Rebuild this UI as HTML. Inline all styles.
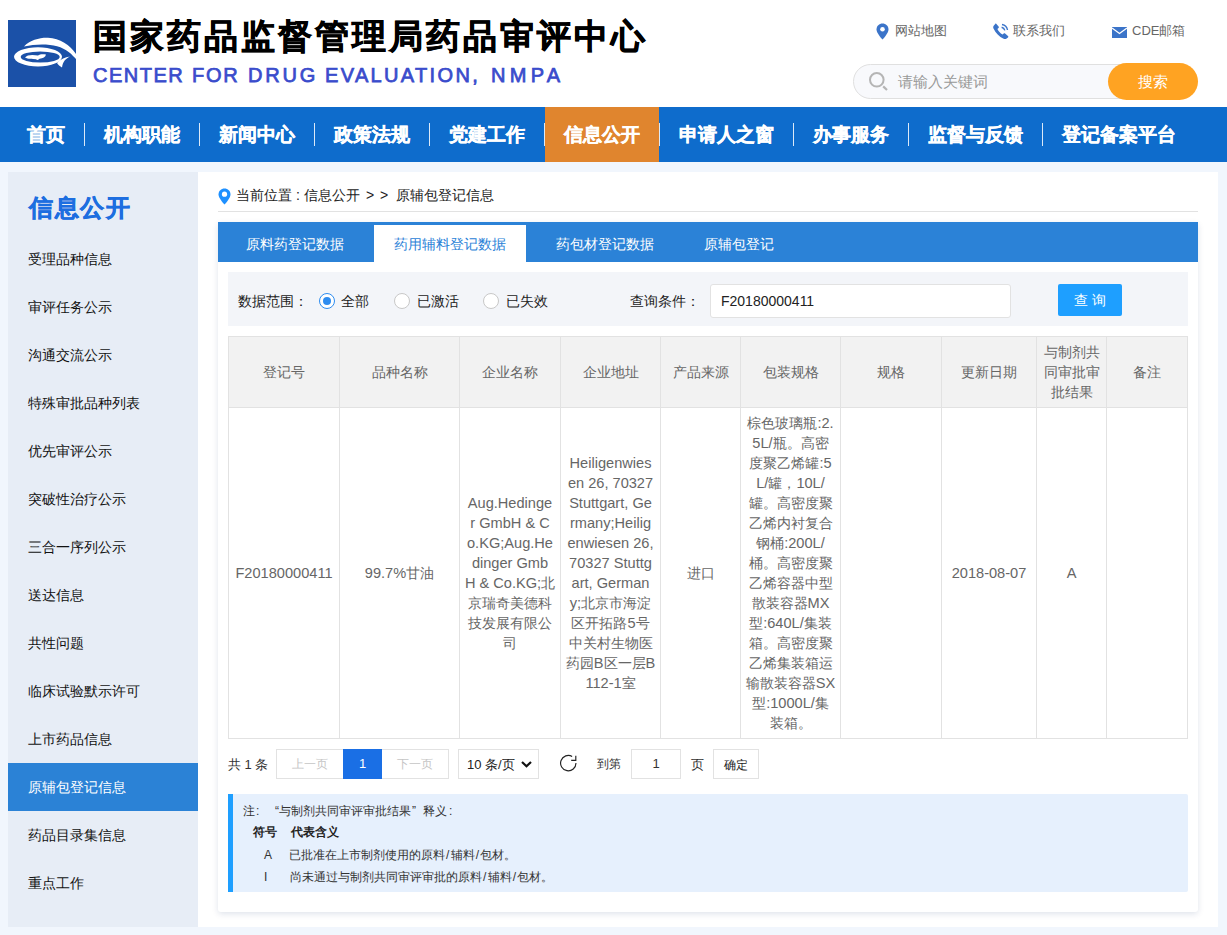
<!DOCTYPE html>
<html><head><meta charset="utf-8">
<style>
*{margin:0;padding:0;box-sizing:border-box}
html,body{width:1227px;height:935px;overflow:hidden}
body{background:#f1f6fd;font-family:"Liberation Sans",sans-serif;position:relative;color:#333}
.abs{position:absolute}
#hdr{position:absolute;left:0;top:0;width:1227px;height:107px;background:#fff}
#logo{left:8px;top:20px;width:68px;height:67px;background:#1b51a8}
#t1{left:93px;top:16px;font-size:34px;font-weight:bold;color:#000;letter-spacing:3px;white-space:nowrap;line-height:40px;-webkit-text-stroke:0.7px #000}
.t2{top:64px;font-size:20px;font-weight:normal;-webkit-text-stroke:0.75px #3a4ccc;color:#3a4ccc;letter-spacing:1.3px;word-spacing:3px;white-space:nowrap;line-height:22px}
.tl{font-size:13px;color:#666;white-space:nowrap;line-height:16px}
#sbox{left:853px;top:64px;width:300px;height:35px;border:1px solid #e0e0e0;border-radius:18px;background:#f8f9fc}
#sbtn{left:1108px;top:63px;width:90px;height:37px;border-radius:19px;background:#ffa322;color:#fff;font-size:15px;text-align:center;line-height:37px}
#nav{left:0;top:107px;width:1227px;height:55px;background:#0e6ccc}
#nav .it{position:absolute;top:0;height:55px;line-height:55px;color:#fff;font-size:19px;font-weight:bold;white-space:nowrap;-webkit-text-stroke:0.35px #fff}
#nav .sep{position:absolute;top:16px;width:1px;height:23px;background:#fff;opacity:.85}
#side{left:8px;top:172px;width:190px;height:755px;background:#e7edf6}
#side .h{position:absolute;left:21px;top:192px;font-size:24px;letter-spacing:1.6px;font-weight:bold;color:#1d6ee0;-webkit-text-stroke:0.5px #1d6ee0}
.si{position:absolute;left:0;width:190px;height:48px;line-height:48px;padding-left:20px;font-size:14px;color:#111;white-space:nowrap}
.si.on{background:#2b82d6;color:#fff}
#main{left:198px;top:172px;width:1020px;height:755px;background:#fff}
#card{left:218px;top:222px;width:980px;height:690px;background:#fff;border-radius:3px;box-shadow:0 2px 6px rgba(0,40,100,.13)}
#tabs{left:218px;top:222px;width:980px;height:40px;background:#2b82d7}
.tab{position:absolute;top:2px;height:40px;line-height:40px;color:#fff;font-size:14px;white-space:nowrap}
#filter{left:228px;top:272px;width:960px;height:54px;background:#f3f5f9}
.ft{position:absolute;font-size:14px;color:#222;white-space:nowrap;line-height:16px}
.radio{position:absolute;width:16px;height:16px;border-radius:50%;border:1px solid #c8c8c8;background:#fff}
.radio.on{border-color:#2d8cf0}
.radio.on::after{content:"";position:absolute;left:3px;top:3px;width:8px;height:8px;border-radius:50%;background:#2d8cf0}
table{position:absolute;left:228px;top:336px;width:959px;border-collapse:collapse;table-layout:fixed}
td,th{border:1px solid #e2e2e2;text-align:center;vertical-align:middle;font-size:14px;line-height:20px;padding:5px 0;overflow:visible;color:#666;font-weight:normal;white-space:nowrap}
th{background:#f2f2f2}
.pg{position:absolute;top:749px;height:30px;border:1px solid #e2e2e2;background:#fff;font-size:13px;line-height:28px;text-align:center;white-space:nowrap}
#note{left:228px;top:794px;width:960px;height:98px;background:#e6f0fd;border-radius:0 2px 2px 0}
#nbar{left:228px;top:794px;width:5px;height:98px;background:#1e9fff}
.bc{top:187px;font-size:14px;color:#222;white-space:nowrap;line-height:16px}
.w{display:inline-block;width:12px}
.sl{margin:0 1.1px}
.L{font-size:14.6px}
.nt{position:absolute;font-size:12px;color:#333;white-space:nowrap;line-height:14px}
</style></head><body>
<div id="hdr"></div>
<div id="logo" class="abs">
<svg width="68" height="67" viewBox="0 0 68 67" style="overflow:visible">
<path d="M16,26.5 C22,20 32,17.5 40,17.8 C52,18.5 62,25 68,34 C70,38 72,42 73,45 C70,41 68,39 65,36 C60,30 52,26 42,25 C32,24 24,25 16,26.5 Z" fill="#fff"/>
<path fill-rule="evenodd" fill="#fff" d="M6,36.8 A24,9.6 0 1 0 54,36.8 A24,9.6 0 1 0 6,36.8 Z M12.7,37 A19.5,5.6 0 1 0 51.7,37 A19.5,5.6 0 1 0 12.7,37 Z"/>
<path d="M49,43 C53,39 57,37 62,36.5 C58,38.5 55,41 54,47.5 C52,46 50,45 49,43 Z" fill="#fff"/>
<path d="M17,37.5 C19,34.5 25,34.5 30,35.5 C32,34 35,33.8 38,34.6 C37.5,37 35,38.5 31.5,38.8 C30.5,40.2 29,40.2 28,39.2 C24,38.8 20,39.5 17,37.5 Z" fill="#fff"/>
</svg>
</div>
<div id="t1" class="abs">国家药品监督管理局药品审评中心</div>
<div class="abs t2" style="left:93px;letter-spacing:1.5px">CENTER</div><div class="abs t2" style="left:192px;letter-spacing:1.8px">FOR</div><div class="abs t2" style="left:248px;letter-spacing:2.8px">DRUG</div><div class="abs t2" style="left:325px;letter-spacing:2.35px">EVALUATION,</div><div class="abs t2" style="left:491px;letter-spacing:4.3px">NMPA</div>

<svg class="abs" style="left:876px;top:23px" width="13" height="17" viewBox="0 0 13 17"><path d="M6.5 0.5C3.2 0.5 0.5 3.1 0.5 6.4C0.5 10.2 6.5 16.5 6.5 16.5S12.5 10.2 12.5 6.4C12.5 3.1 9.8 0.5 6.5 0.5Z" fill="#3b74c9"/><circle cx="6.5" cy="6.3" r="2.3" fill="#fff"/></svg>
<div class="abs tl" style="left:895px;top:23px">网站地图</div>
<svg class="abs" style="left:993px;top:23px" width="16" height="16" viewBox="0 0 16 16"><path d="M3.2 0.8L5.6 3.6C6 4.1 5.9 4.7 5.5 5.1L4.4 6.1C5.2 8 7.3 10.4 9.6 11.6L10.7 10.6C11.1 10.2 11.7 10.2 12.1 10.6L15 13C15.4 13.4 15.4 14 15 14.4L13.6 15.6C12.8 16.3 11.6 16.3 10.6 15.8C6.2 13.6 2.6 9.9 0.5 5.4C0 4.4 0.1 3.2 0.9 2.4L2.2 0.9C2.5 0.5 2.9 0.5 3.2 0.8Z" fill="#3b74c9"/><path d="M9 1.5C11.8 2 14 4.2 14.5 7" stroke="#3b74c9" stroke-width="1.4" fill="none"/><path d="M8.6 4.2C10.3 4.6 11.4 5.7 11.8 7.4" stroke="#3b74c9" stroke-width="1.4" fill="none"/></svg>
<div class="abs tl" style="left:1013px;top:23px">联系我们</div>
<svg class="abs" style="left:1112px;top:27px" width="15" height="11" viewBox="0 0 15 11"><rect x="0" y="0" width="15" height="11" fill="#3b74c9"/><path d="M0 1L7.5 6.5L15 1" stroke="#fff" stroke-width="1.3" fill="none"/></svg>
<div class="abs tl" style="left:1132px;top:23px">CDE邮箱</div>

<div id="sbox" class="abs"></div>
<svg class="abs" style="left:869px;top:72px" width="19" height="19" viewBox="0 0 19 19"><circle cx="7.8" cy="7.8" r="6.8" stroke="#b5b5b5" stroke-width="2" fill="none"/><path d="M14.2 14.4L18 18" stroke="#b5b5b5" stroke-width="2.2"/></svg>
<div class="abs" style="left:898px;top:73px;font-size:15px;color:#999;white-space:nowrap;line-height:17px">请输入关键词</div>
<div id="sbtn" class="abs">搜索</div>

<div id="nav" class="abs">
<div class="it" style="left:27px">首页</div>
<div class="sep" style="left:84px"></div>
<div class="it" style="left:104px">机构职能</div>
<div class="sep" style="left:199px"></div>
<div class="it" style="left:219px">新闻中心</div>
<div class="sep" style="left:314px"></div>
<div class="it" style="left:334px">政策法规</div>
<div class="sep" style="left:429px"></div>
<div class="it" style="left:449px">党建工作</div>
<div class="sep" style="left:544px"></div>
<div class="abs" style="left:545px;top:0;width:114px;height:55px;background:#e0852e"></div>
<div class="it" style="left:564px">信息公开</div>
<div class="sep" style="left:659px"></div>
<div class="it" style="left:679px">申请人之窗</div>
<div class="sep" style="left:793px"></div>
<div class="it" style="left:813px">办事服务</div>
<div class="sep" style="left:908px"></div>
<div class="it" style="left:928px">监督与反馈</div>
<div class="sep" style="left:1042px"></div>
<div class="it" style="left:1062px">登记备案平台</div>
</div>

<div id="side" class="abs">
<div class="h" style="top:21px;line-height:30px">信息公开</div>
<div class="si" style="top:63px">受理品种信息</div>
<div class="si" style="top:111px">审评任务公示</div>
<div class="si" style="top:159px">沟通交流公示</div>
<div class="si" style="top:207px">特殊审批品种列表</div>
<div class="si" style="top:255px">优先审评公示</div>
<div class="si" style="top:303px">突破性治疗公示</div>
<div class="si" style="top:351px">三合一序列公示</div>
<div class="si" style="top:399px">送达信息</div>
<div class="si" style="top:447px">共性问题</div>
<div class="si" style="top:495px">临床试验默示许可</div>
<div class="si" style="top:543px">上市药品信息</div>
<div class="si on" style="top:591px">原辅包登记信息</div>
<div class="si" style="top:639px">药品目录集信息</div>
<div class="si" style="top:687px">重点工作</div>
</div>

<div id="main" class="abs"></div>
<svg class="abs" style="left:218px;top:188px" width="13" height="17" viewBox="0 0 13 17"><path d="M6.5 0.5C3.2 0.5 0.5 3.1 0.5 6.4C0.5 10.2 6.5 16.5 6.5 16.5S12.5 10.2 12.5 6.4C12.5 3.1 9.8 0.5 6.5 0.5Z" fill="#1e90ff"/><circle cx="6.5" cy="6.2" r="2.6" fill="#fff"/></svg>
<div class="abs bc" style="left:236px">当前位置 : 信息公开</div><div class="abs bc" style="left:366px">&gt;</div><div class="abs bc" style="left:380px">&gt;</div><div class="abs bc" style="left:396px">原辅包登记信息</div>
<div class="abs" style="left:218px;top:211px;width:980px;height:1px;background:#e2e2e2"></div>

<div id="card" class="abs"></div>
<div id="tabs" class="abs">
<div class="tab" style="left:28px">原料药登记数据</div>
<div class="abs" style="left:156px;top:3px;width:152px;height:37px;background:#fff"></div>
<div class="tab" style="left:176px;color:#2b82d7">药用辅料登记数据</div>
<div class="tab" style="left:338px">药包材登记数据</div>
<div class="tab" style="left:486px">原辅包登记</div>
</div>

<div id="filter" class="abs">
<div class="ft" style="left:10px;top:21px">数据范围：</div>
<div class="radio on" style="left:91px;top:21px"></div>
<div class="ft" style="left:113px;top:21px">全部</div>
<div class="radio" style="left:166px;top:21px"></div>
<div class="ft" style="left:189px;top:21px">已激活</div>
<div class="radio" style="left:255px;top:21px"></div>
<div class="ft" style="left:278px;top:21px">已失效</div>
<div class="ft" style="left:402px;top:21px">查询条件：</div>
<div class="abs" style="left:482px;top:12px;width:301px;height:34px;background:#fff;border:1px solid #e2e2e2;border-radius:3px"></div>
<div class="ft" style="left:493px;top:21px;color:#222">F20180000411</div>
<div class="abs" style="left:830px;top:12px;width:64px;height:32px;background:#1e9fff;border-radius:2px;color:#fff;font-size:14px;line-height:32px;text-align:center;letter-spacing:4px;padding-left:4px">查询</div>
</div>

<table>
<colgroup><col style="width:111px"><col style="width:120px"><col style="width:101px"><col style="width:100px"><col style="width:80px"><col style="width:100px"><col style="width:101px"><col style="width:95px"><col style="width:70px"><col style="width:81px"></colgroup>
<tr style="height:71px"><th>登记号</th><th>品种名称</th><th>企业名称</th><th>企业地址</th><th>产品来源</th><th>包装规格</th><th>规格</th><th>更新日期</th><th>与制剂共<br>同审批审<br>批结果</th><th>备注</th></tr>
<tr style="height:331px"><td><span class="L">F20180000411</span></td><td><span class="L">99.7%</span>甘油</td>
<td><span class="L">Aug.Hedinge</span><br><span class="L">r GmbH &amp; C</span><br><span class="L">o.KG;Aug.He</span><br><span class="L">dinger Gmb</span><br><span class="L">H &amp; Co.KG;</span>北<br>京瑞奇美德科<br>技发展有限公<br>司</td>
<td><span class="L">Heiligenwies</span><br><span class="L">en 26, 70327</span><br><span class="L">Stuttgart, Ge</span><br><span class="L">rmany;Heilig</span><br><span class="L">enwiesen 26,</span><br><span class="L">70327 Stuttg</span><br><span class="L">art, German</span><br><span class="L">y;</span>北京市海淀<br>区开拓路<span class="L">5</span>号<br>中关村生物医<br>药园<span class="L">B</span>区一层<span class="L">B</span><br><span class="L">112-1</span>室</td>
<td>进口</td>
<td>棕色玻璃瓶<span class="L">:2.</span><br><span class="L">5L/</span>瓶。高密<br>度聚乙烯罐<span class="L">:5</span><br><span class="L">L/</span>罐，<span class="L">10L/</span><br>罐。高密度聚<br>乙烯内衬复合<br>钢桶<span class="L">:200L/</span><br>桶。高密度聚<br>乙烯容器中型<br>散装容器<span class="L">MX</span><br>型<span class="L">:640L/</span>集装<br>箱。高密度聚<br>乙烯集装箱运<br>输散装容器<span class="L">SX</span><br>型<span class="L">:1000L/</span>集<br>装箱。</td>
<td></td><td><span class="L">2018-08-07</span></td><td><span class="L">A</span></td><td></td></tr>
</table>

<div class="abs" style="left:228px;top:757px;font-size:13px;color:#333;white-space:nowrap;line-height:15px">共 1 条</div>
<div class="pg" style="left:276px;width:173px"></div>
<div class="abs" style="left:292px;top:757px;font-size:12px;color:#c5c5c5;line-height:15px">上一页</div>
<div class="abs" style="left:343px;top:749px;width:39px;height:30px;background:#1a6fe5;color:#fff;font-size:13px;line-height:30px;text-align:center">1</div>
<div class="abs" style="left:397px;top:757px;font-size:12px;color:#c5c5c5;line-height:15px">下一页</div>
<div class="pg" style="left:458px;width:81px"></div>
<div class="abs" style="left:467px;top:757px;font-size:13px;color:#222;white-space:nowrap;line-height:15px">10 条/页</div>
<svg class="abs" style="left:521px;top:761px" width="11" height="7" viewBox="0 0 11 7"><path d="M1 1L5.5 5.3L10 1" stroke="#111" stroke-width="2.2" fill="none"/></svg>
<svg class="abs" style="left:559px;top:754px" width="18" height="18" viewBox="0 0 18 18"><path d="M17,9.1 A7.7,7.7 0 1 1 13.15,2.43" stroke="#222" stroke-width="1.15" fill="none"/><path d="M12.2,6.3 L16.8,6.3 L16.8,1.8" stroke="#222" stroke-width="1.15" fill="none"/></svg>
<div class="abs" style="left:597px;top:757px;font-size:12px;color:#333;line-height:15px">到第</div>
<div class="pg" style="left:631px;width:50px">1</div>
<div class="abs" style="left:691px;top:757px;font-size:13px;color:#333;line-height:15px">页</div>
<div class="pg" style="left:713px;width:46px;color:#222;line-height:30px;font-size:12px">确定</div>

<div id="note" class="abs"></div>
<div id="nbar" class="abs"></div>
<div class="nt" style="left:243px;top:804px"><span class="w">注</span><span class="w" style="padding-left:1px">:</span><span class="w" style="text-align:right">“</span>与制剂共同审评审批结果<span class="w" style="padding-left:1px">”</span>释义<span class="w" style="padding-left:2px">:</span></div>
<div class="nt" style="left:253px;top:825px;font-weight:bold;color:#222">符号</div>
<div class="nt" style="left:291px;top:825px;font-weight:bold;color:#222">代表含义</div>
<div class="nt" style="left:264px;top:848px">A</div>
<div class="nt" style="left:289px;top:848px">已批准在上市制剂使用的原料<span class="sl">/</span>辅料<span class="sl">/</span>包材。</div>
<div class="nt" style="left:264px;top:870px">I</div>
<div class="nt" style="left:290px;top:870px">尚未通过与制剂共同审评审批的原料<span class="sl">/</span>辅料<span class="sl">/</span>包材。</div>
</body></html>
